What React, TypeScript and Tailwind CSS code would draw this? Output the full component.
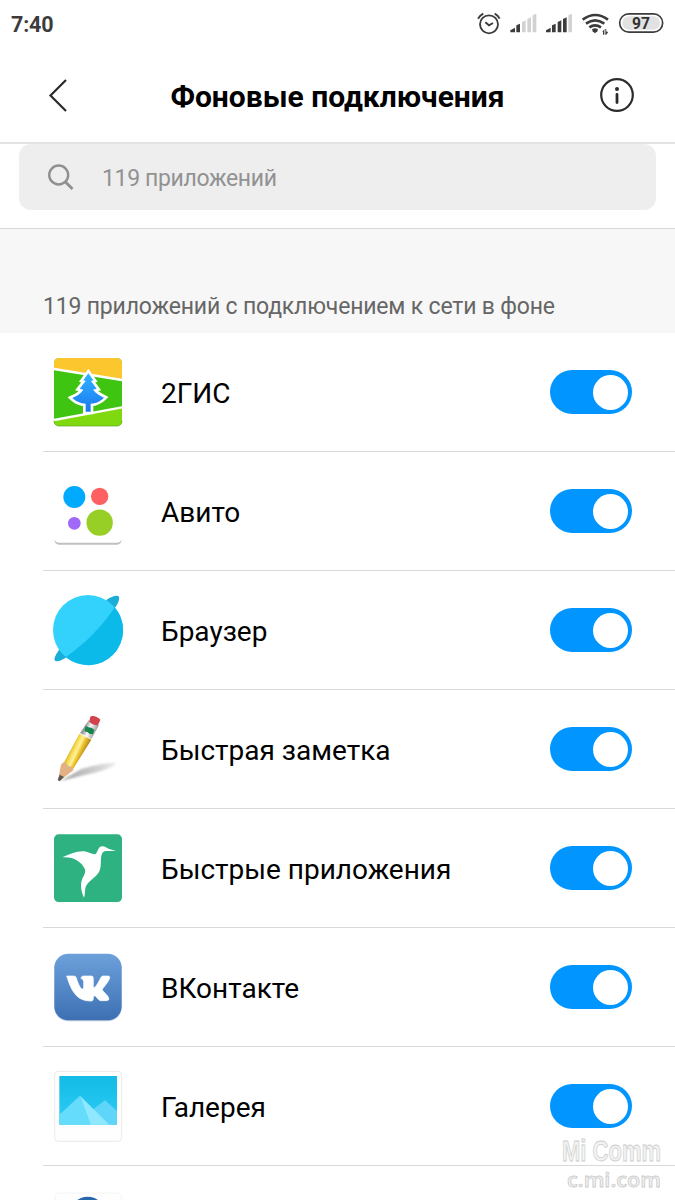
import * as React from "react";
import * as SwitchPrimitive from "@radix-ui/react-switch";

const TwoGisIcon = () => (
  <svg width="100" height="118" viewBox="0 -36 300 354">
    <defs>
      <clipPath id="gis-clip">
        <rect x="42" y="39" width="204" height="204" rx="15" />
      </clipPath>
      <linearGradient id="gis-tree" x1="0" y1="0" x2="0" y2="1">
        <stop offset="0" stopColor="#2fb4ff" />
        <stop offset="1" stopColor="#1b78f0" />
      </linearGradient>
    </defs>
    <g clipPath="url(#gis-clip)">
      <rect x="42" y="39" width="204" height="204" fill="#3fc411" />
      <path d="M42 39h204v65L42 71z" fill="#fcc62f" />
      <path d="M42 225l204-37v56H42z" fill="#80d80f" />
      <path d="M42 72l204 33M42 225l204-38" stroke="#fff" strokeWidth="7" />
      <path
        d="M145 85l15 21-7 2 17 23-11 3c10 12 21 18 33 24-12 12-24 17-40 18v24h-15v-24c-16-1-28-6-40-17 13-6 25-13 33-25l-11-3 18-23-7-2z"
        fill="url(#gis-tree)"
        stroke="#fff"
        strokeWidth="16"
        paintOrder="stroke"
      />
    </g>
    <path d="M42 227v1c0 8 6 15 15 15h174c9 0 15-7 15-15v-1" fill="none" stroke="#55aa10" strokeWidth="2" />
  </svg>
);

const AvitoIcon = () => (
  <svg width="100" height="118" viewBox="0 -54 300 354">
    <path d="M43 207c0 11 5 17 15 17h172c10 0 15-6 15-17-2 8-7 11-15 11H58c-8 0-13-3-15-11z" fill="#c0c0c0" />
    <circle cx="103" cy="81" r="33" fill="#00aaff" />
    <circle cx="179" cy="79" r="26" fill="#ff6163" />
    <circle cx="103" cy="160" r="19" fill="#a169f7" />
    <circle cx="179" cy="158" r="39.5" fill="#97cf26" />
  </svg>
);

const BrowserIcon = () => (
  <svg width="100" height="118" viewBox="0 -42 300 354">
    <path d="M198 46c18-13 37-18 39-9 2 10-5 22-14 35zM61 190c-12 15-20 30-17 36 4 7 19 1 37-10z" fill="#1aaed6" />
    <circle cx="144" cy="135" r="105" fill="#33d2fc" />
    <path d="M224 67A105 105 0 0 1 77 216C134 178 190 121 224 67z" fill="#0bbae9" />
  </svg>
);

const NoteIcon = () => (
  <svg width="100" height="118" viewBox="0 -45 300 354">
    <defs>
      <linearGradient id="pencil-body" gradientUnits="userSpaceOnUse" x1="95" y1="120" x2="135" y2="139">
        <stop offset="0" stopColor="#d4ae22" />
        <stop offset="0.25" stopColor="#f7dc50" />
        <stop offset="0.5" stopColor="#fdf0a0" />
        <stop offset="0.65" stopColor="#f3cd35" />
        <stop offset="1" stopColor="#b98a18" />
      </linearGradient>
      <linearGradient id="pencil-metal" gradientUnits="userSpaceOnUse" x1="138" y1="60" x2="174" y2="76">
        <stop offset="0" stopColor="#9a9a9a" />
        <stop offset="0.35" stopColor="#fafafa" />
        <stop offset="1" stopColor="#8d8d8d" />
      </linearGradient>
      <linearGradient id="pencil-shadow" x1="0" y1="0" x2="1" y2="0">
        <stop offset="0" stopColor="#a0a0a0" />
        <stop offset="1" stopColor="#ececec" />
      </linearGradient>
      <filter id="pencil-soft" x="-10%" y="-20%" width="120%" height="140%">
        <feGaussianBlur stdDeviation="3" />
      </filter>
    </defs>
    <path d="M62 228l62-36c40-11 80-22 106-17-22 18-58 28-96 35z" fill="url(#pencil-shadow)" filter="url(#pencil-soft)" />
    <path d="M118 86l36 18-56 90-34 31-7-3 12-44z" fill="url(#pencil-body)" />
    <path d="M70 172l8 2 8 10 8 1 7 10-41 31-5-5 8-42z" fill="#e3b184" />
    <path d="M59 209l13 7-13 13-6-4z" fill="#595959" />
    <path d="M146 46l31 15-23 41-34-18z" fill="url(#pencil-metal)" />
    <path d="M137 62l8 5 9 1 9 6-4 14-9-1-8-6-9-2z" fill="#14854f" />
    <path d="M151 35c6-6 27 3 30 10l-7 15c-10 3-22-3-26-11z" fill="#d0424c" />
  </svg>
);

const HummingbirdIcon = () => (
  <svg width="100" height="118" viewBox="0 -48 300 354">
    <rect x="42" y="28" width="204" height="203" rx="14" fill="#2fb281" />
    <path
      d="M67 97c20-9 44-20 66-18 16 2 24 11 34 8 7-6 6-22 20-23 9 0 12 5 20 8l21 6-29 0c-9 0-13 5-15 15-3 16 1 34-7 48-10 17-34 28-40 45-3 10-1 22-5 32-8-17-12-38-6-54 5-13 13-22 8-33-10-22-36-37-67-34z"
      fill="#fff"
    />
  </svg>
);

const VkIcon = () => (
  <svg width="100" height="118" viewBox="0 -51 300 354">
    <defs>
      <linearGradient id="vk-bg" x1="0" y1="0" x2="0" y2="1">
        <stop offset="0" stopColor="#6ca1db" />
        <stop offset="1" stopColor="#3d70b3" />
      </linearGradient>
    </defs>
    <rect x="43" y="28" width="202" height="201" rx="42" fill="#c3cfdf" />
    <rect x="43" y="26" width="202" height="200" rx="42" fill="url(#vk-bg)" />
    <path
      d="M80 93h21c6 0 7 3 9 9 5 16 12 30 18 30 3 0 3-5 3-9v-11c0-8-3-8-8-12 0-5 4-7 8-7h23c4 0 6 2 6 8v23c0 3 2 5 4 3 7-6 12-17 18-28 2-4 4-6 8-6h12c8 0 9 4 5 11-4 9-12 17-18 26-3 4-2 6 1 9 6 7 14 13 16 20 2 5-1 8-8 8h-14c-5 0-7-2-11-6-5-6-9-10-11-8-3 2-1 8-3 12-1 3-4 3-8 3-43 0-58-34-71-75z"
      fill="#fff"
      stroke="#fff"
      strokeWidth="2"
    />
  </svg>
);

const GalleryIcon = () => (
  <svg width="100" height="118" viewBox="0 -39 300 354">
    <defs>
      <linearGradient id="gallery-sky" x1="0" y1="0" x2="0" y2="1">
        <stop offset="0" stopColor="#12bbe6" />
        <stop offset="1" stopColor="#2fcdf5" />
      </linearGradient>
    </defs>
    <rect x="44" y="34" width="201" height="210" rx="11" fill="#fefefe" stroke="#e6e6e6" strokeWidth="2.5" />
    <rect x="58" y="48" width="173" height="146" fill="url(#gallery-sky)" />
    <path d="M156 151l39-30 36 32v41h-60z" fill="#5fd5f9" />
    <path d="M58 164l62-57 32 87H58z" fill="#66dcfc" />
    <path d="M120 107l88 87h-56z" fill="#90e8ff" />
  </svg>
);

const NextAppIcon = () => (
  <svg width="100" height="34" viewBox="0 0 300 102">
    <path d="M45 102V94c0-8 5-13 12-13h176c8 0 12 5 12 13v8" fill="#fefefe" stroke="#efefef" strokeWidth="2" />
    <circle cx="143" cy="145" r="53" fill="#2866ae" />
  </svg>
);

const apps = [
  { name: "2ГИС", Icon: TwoGisIcon },
  { name: "Авито", Icon: AvitoIcon },
  { name: "Браузер", Icon: BrowserIcon },
  { name: "Быстрая заметка", Icon: NoteIcon },
  { name: "Быстрые приложения", Icon: HummingbirdIcon },
  { name: "ВКонтакте", Icon: VkIcon },
  { name: "Галерея", Icon: GalleryIcon },
];

const Switch = React.forwardRef<
  React.ElementRef<typeof SwitchPrimitive.Root>,
  React.ComponentPropsWithoutRef<typeof SwitchPrimitive.Root>
>((props, ref) => (
  <SwitchPrimitive.Root
    ref={ref}
    className="flex h-11 w-[82px] shrink-0 items-center rounded-full bg-gray-300 px-1 data-[state=checked]:justify-end data-[state=checked]:bg-[#0095ff]"
    {...props}
  >
    <SwitchPrimitive.Thumb className="block size-[35px] rounded-full bg-white" />
  </SwitchPrimitive.Root>
));
Switch.displayName = "Switch";

const StatusBar = () => (
  <div className="flex h-12 items-center justify-between pl-[11px] text-[#3c3c3c]">
    <span className="pt-0.5 text-[21.5px] font-bold leading-none tracking-[-0.2px]">7:40</span>
    <svg width="210" height="48" viewBox="0 0 630 144" fill="none" stroke="#3c3c3c">
      <circle cx="72" cy="73" r="27" strokeWidth="5.5" />
      <path d="M61 67l11 9 12-7M39 56q6-10 16-15M89 41q10 5 15 15" strokeWidth="5.5" />
      <g stroke="none" fill="#3c3c3c">
        <path d="M136 91l14-8v14h-14zM154 76l11-5v26h-11z" />
        <path d="M171 66l11-5v36h-11zM187 57l11-5v45h-11zM203 46l11-5v56h-11z" fill="#d2d2d2" />
        <path d="M243 91l14-8v14h-14zM261 76l11-5v26h-11zM278 66l11-5v36h-11zM294 57l11-5v45h-11z" />
        <path d="M310 46l11-5v56h-11z" fill="#d2d2d2" />
        <path d="M381 88q9-6 18 0l-2 6-7 6-7-6z" />
        <path d="M412 96l6-9v17h-4v-8zM421 87h3v8h6l-6 9h-3z" />
      </g>
      <path d="M353 59q38-28 76 0M363 71q27-20 55 0M373 82q17-12 35 0" strokeWidth="8" />
      <rect x="464" y="41.500" width="129" height="55" rx="27.500" strokeWidth="5" fill="#fff" />
      <rect x="472" y="49" width="113" height="40" rx="20" fill="#e2e2e2" stroke="none" />
      <text x="528" y="86" fontFamily="Roboto" fontWeight="700" fontSize="47" textAnchor="middle" fill="#333" stroke="none">
        97
      </text>
    </svg>
  </div>
);

const Header = () => (
  <header className="flex h-24 items-center justify-between border-b-2 border-[#e3e3e3] pl-[46px] pr-10">
    <svg width="24" height="36" viewBox="0 0 24 36" fill="none" stroke="#2b2b2b" strokeWidth="2.200">
      <path d="M20 3L4.500 18.500L20 34" />
    </svg>
    <h1 className="pl-1.5 pt-[3px] text-[30px] font-bold leading-none text-black">Фоновые подключения</h1>
    <svg width="36" height="36" viewBox="0 0 36 36" fill="none" stroke="#2b2b2b">
      <circle cx="18" cy="18" r="15.800" strokeWidth="2.200" />
      <path d="M18 17.500v8" strokeWidth="2.800" strokeLinecap="round" />
      <circle cx="18" cy="12" r="2" fill="#2b2b2b" stroke="none" />
    </svg>
  </header>
);

const SearchBar = () => (
  <div className="h-[85px] border-b border-[#d9d9d9] px-[19px]">
    <div className="flex h-[66px] items-center rounded-xl bg-[#eeeeee] pl-7 text-[#929292]">
      <svg width="28" height="28" viewBox="0 0 28 28" fill="none" stroke="#8f8f8f" strokeWidth="2.400">
        <circle cx="11.700" cy="12" r="9.500" />
        <path d="M18.500 19l7 7" strokeWidth="2.800" />
      </svg>
      <span className="ml-[27px] pt-0.5 text-[23px] leading-none tracking-[-0.35px]">119 приложений</span>
    </div>
  </div>
);

export default function App() {
  return (
    <div className="relative h-[1200px] w-[675px] overflow-hidden bg-white font-['Roboto',sans-serif]">
      <StatusBar />
      <Header />
      <SearchBar />
      <div className="flex h-[104px] items-end bg-[#f7f7f7] pb-[15px] pl-[43px] text-[23px] leading-none tracking-[-0.18px] text-[#666]">
        119 приложений с подключением к сети в фоне
      </div>
      <ul>
        {apps.map(({ name, Icon }) => (
          <li key={name}>
            <div className="flex h-[118px] items-center pl-10 pr-[43px]">
              <Icon />
              <span className="ml-[21px] flex-1 pt-[3px] text-[28px] leading-none text-black">{name}</span>
              <Switch defaultChecked aria-label={name} />
            </div>
            <div className="ml-[43px] h-px bg-[#d9d9d9]" />
          </li>
        ))}
        <li className="pl-10">
          <NextAppIcon />
        </li>
      </ul>
      <svg className="absolute bottom-0 right-0" width="120" height="66" viewBox="0 0 120 66" fill="#f3f3f3" stroke="#cccccc" strokeWidth="0.8">
        <text transform="translate(7 27) scale(0.76 1)" fontFamily="Liberation Sans" fontWeight="700" fontSize="29">
          Mi Comm
        </text>
        <text transform="translate(12 53)" fontFamily="Open Sans" fontWeight="600" fontSize="20" textLength="94" lengthAdjust="spacingAndGlyphs">
          c.mi.com
        </text>
      </svg>
    </div>
  );
}
